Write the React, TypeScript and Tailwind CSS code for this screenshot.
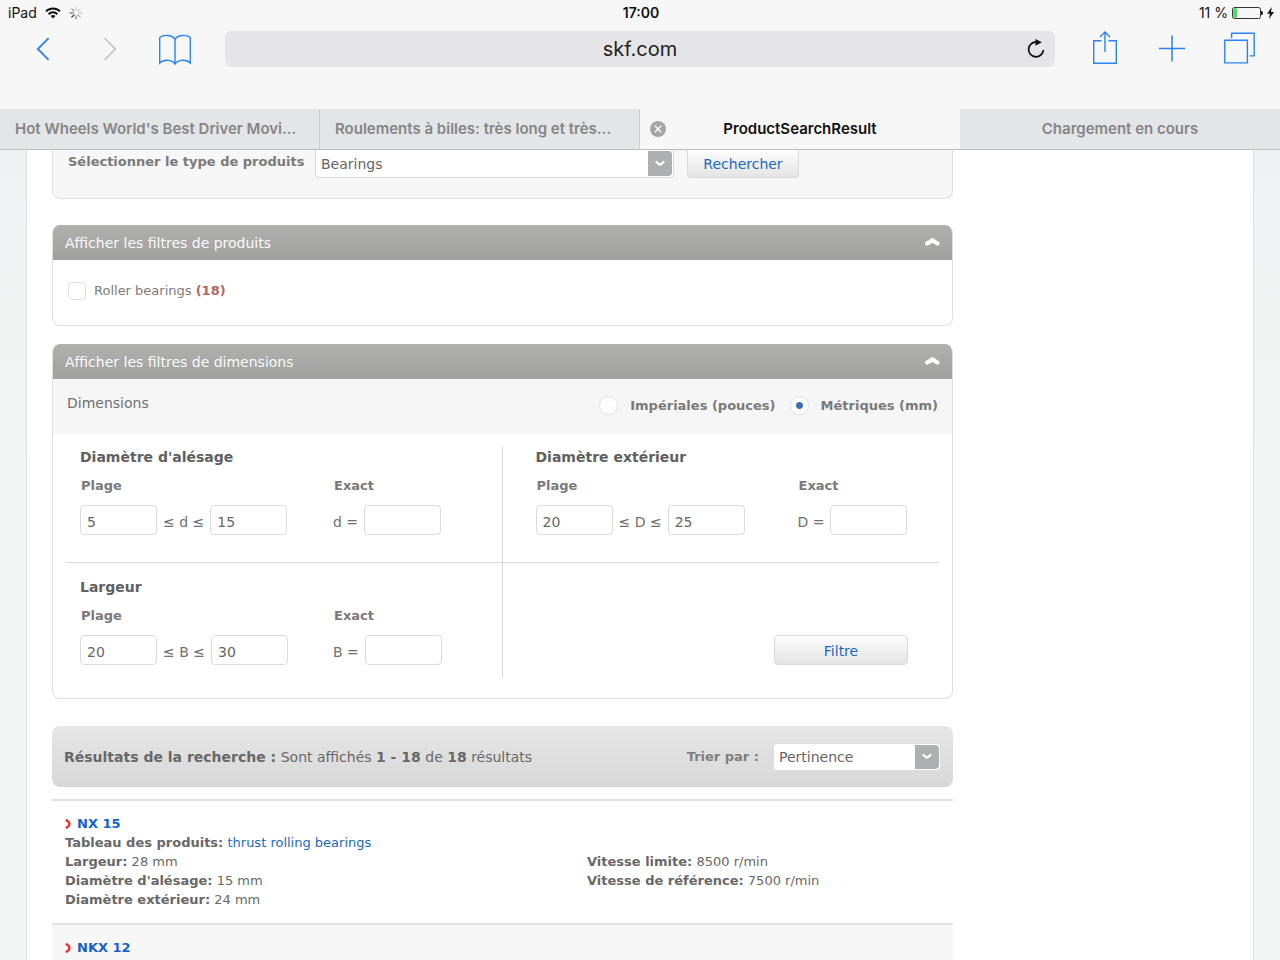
import type { ReactNode } from "react";

const tabs = [
  { title: "Hot Wheels World's Best Driver Movi...", active: false, place: "justify-start" },
  { title: "Roulements à billes: très long et très...", active: false, place: "justify-start" },
  { title: "ProductSearchResult", active: true, place: "justify-center" },
  { title: "Chargement en cours", active: false, place: "justify-center" },
];

const results = [
  {
    name: "NX 15",
    table: "thrust rolling bearings",
    left: [
      ["Largeur:", "28 mm"],
      ["Diamètre d'alésage:", "15 mm"],
      ["Diamètre extérieur:", "24 mm"],
    ],
    right: [
      ["Vitesse limite:", "8500 r/min"],
      ["Vitesse de référence:", "7500 r/min"],
    ],
  },
  { name: "NKX 12", table: "", left: [], right: [] },
];

const StatusBar = () => (
  <div className="grid h-[26px] grid-cols-3 items-center pl-2 pr-1.5 text-sm leading-5 text-[#111]">
    <div className="flex items-center">
      <span>iPad</span>
      <svg className="ml-2 h-3 w-4" viewBox="0 0 16 12" fill="none" stroke="#111" strokeWidth="2">
        <path d="M1 4.4a10 10 0 0 1 14 0" />
        <path d="M3.6 7.2a6.2 6.2 0 0 1 8.8 0" />
        <path d="M8 11.6 5.6 9.1a3.4 3.4 0 0 1 4.8 0z" fill="#111" stroke="none" />
      </svg>
      <svg className="ml-2 h-3.5 w-3.5" viewBox="0 0 14 14" strokeWidth="1.2" strokeLinecap="round">
        <path d="M7 4.2V1" stroke="#ccc" />
        <path d="M9 5l2.2-2.2" stroke="#ccc" />
        <path d="M9.8 7H13" stroke="#bbb" />
        <path d="M9 9l2.2 2.2" stroke="#aaa" />
        <path d="M7 9.8V13" stroke="#888" />
        <path d="M5 9l-2.2 2.2" stroke="#333" />
        <path d="M4.2 7H1" stroke="#555" />
        <path d="M5 5 2.8 2.8" stroke="#999" />
      </svg>
    </div>
    <span className="text-center font-semibold">17:00</span>
    <div className="flex items-center justify-end">
      <span>11 %</span>
      <svg className="ml-1 h-3 w-[31px]" viewBox="0 0 31 12" fill="none">
        <rect x="0.5" y="0.5" width="28" height="11" rx="2" stroke="#333" />
        <rect x="1.3" y="1.3" width="3.7" height="9.4" rx="1" fill="#4cd964" />
        <path d="M29.5 4v4c1.2-.4 1.2-3.6 0-4z" fill="#222" stroke="#222" />
      </svg>
      <svg className="ml-1 h-3 w-[7px]" viewBox="0 0 7 12" fill="#111">
        <path d="M4.8 0 0 6.8h3L2 12l5-7H4z" />
      </svg>
    </div>
  </div>
);

const Toolbar = () => (
  <div className="flex h-[83px] items-start pl-8 pr-6 pt-[5px] text-[#2a82f3]">
    <button aria-label="Précédent" className="mt-1.5 h-6 w-6">
      <svg className="h-6 w-6" viewBox="0 0 24 24" fill="none" stroke="currentColor" strokeWidth="1.8">
        <path d="M16.6 1.2 5.8 12 16.600 22.800" />
      </svg>
    </button>
    <button aria-label="Suivant" className="ml-10 mt-1.5 h-6 w-6 text-[#c9c9c9]">
      <svg className="h-6 w-6" viewBox="0 0 24 24" fill="none" stroke="currentColor" strokeWidth="1.8">
        <path d="M8.6 1.2 19.400 12 8.600 22.800" />
      </svg>
    </button>
    <button aria-label="Signets" className="ml-[38px] mt-[3px] h-8 w-[34px]">
      <svg className="h-8 w-[34px]" viewBox="0 0 34 32" fill="none" stroke="currentColor" strokeWidth="1.4">
        <path d="M17 5.500C15 .6 5.500.2 1.700 3.600V29C5.500 25 14 25.500 17 30 20 25.500 28.500 25 32.300 29V3.600C28.500.2 19 .6 17 5.500zM17 5.500v25" />
      </svg>
    </button>
    <div className="relative ml-[33px] flex h-9 flex-1 items-center rounded-md bg-[#e5e5e7]">
      <input
        aria-label="Adresse"
        defaultValue="skf.com"
        className="w-full bg-transparent text-center text-xl text-[#222] outline-none"
      />
      <button aria-label="Actualiser" className="absolute right-[9px] top-2 h-5 w-5">
        <svg className="h-5 w-5" viewBox="0 0 20 20" fill="none" stroke="#111" strokeWidth="1.8">
          <path d="M10.500 3A7.400 7.400 0 1 0 17.400 11" />
          <path d="M9.500 0 15.800 3.200 9.500 6.800z" fill="#111" stroke="none" />
        </svg>
      </button>
    </div>
    <button aria-label="Partager" className="ml-[37px] h-9 w-[26px]">
      <svg className="h-9 w-[26px]" viewBox="0 0 26 36" fill="none" stroke="currentColor" strokeWidth="1.4">
        <path d="M9.500 9.700H1.700v22.600h22.600V9.700H16.500M13 21V1.500M8 6 13 1l5 5" />
      </svg>
    </button>
    <button aria-label="Nouvel onglet" className="ml-10 mt-[3px] h-7 w-7">
      <svg className="h-7 w-7" viewBox="0 0 28 28" fill="none" stroke="currentColor" strokeWidth="1.5">
        <path d="M14 1.500v26M1 14.500h26" />
      </svg>
    </button>
    <button aria-label="Onglets" className="ml-[38px] mt-px h-8 w-8">
      <svg className="h-8 w-8" viewBox="0 0 32 32" fill="none" stroke="currentColor" strokeWidth="1.4">
        <path d="M.8 8.300h22.600v22.600H.8zM7.600 6.200V1.300h22.600v22.600H25.500" />
      </svg>
    </button>
  </div>
);

const TabStrip = () => (
  <nav className="grid h-[41px] grid-cols-4 border-b border-[#bdbdc0]">
    {tabs.map((tab) =>
      tab.active ? (
        <div key={tab.title} className="relative flex items-center justify-center text-[#111]">
          <button aria-label="Fermer l'onglet" className="absolute left-2.5 top-3 h-4 w-4">
            <svg className="h-4 w-4" viewBox="0 0 16 16">
              <circle cx="8" cy="8" r="8" fill="#a5a5a6" />
              <path d="M4.8 4.8l6.400 6.400M11.200 4.800l-6.400 6.400" stroke="#fff" strokeWidth="1.3" />
            </svg>
          </button>
          <a href="#" className="text-[15px] font-semibold leading-5">{tab.title}</a>
        </div>
      ) : (
        <div
          key={tab.title}
          className={`flex items-center border-r border-[#cfcfd1] bg-[#e4e5e6] px-[15px] text-[#858587] last:border-r-0 ${tab.place}`}
        >
          <a href="#" className="truncate text-[15px] font-semibold leading-5">{tab.title}</a>
        </div>
      ),
    )}
  </nav>
);

const Select = ({ id, value, className }: { id: string; value: string; className: string }) => (
  <div className={`relative border border-[#dcdcdc] bg-white ${className}`}>
    <select id={id} className="h-full w-full appearance-none bg-transparent pl-[5px] pt-px text-sm text-[#666] outline-none">
      <option>{value}</option>
    </select>
    <span className="pointer-events-none absolute bottom-px right-px top-px flex w-6 items-center justify-center rounded-r-sm bg-[#aeafb1]">
      <svg className="h-2 w-2.5" viewBox="0 0 10 8" fill="none" stroke="#fff" strokeWidth="2.4">
        <path d="M.8 1.500C2.500 2.500 3.500 4.500 5 4.500S7.500 2.500 9.200 1.500" />
      </svg>
    </span>
  </div>
);

const Panel = ({ title, children }: { title: string; children: ReactNode }) => (
  <section className="overflow-hidden rounded-lg border border-t-0 border-[#e0e0e0]">
    <button className="flex h-[35px] w-full items-center justify-between bg-gradient-to-b from-[#b0b0ae] to-[#a0a09e] px-3 text-sm text-[#fafafa]">
      <span className="pt-px">{title}</span>
      <svg className="h-3 w-4" viewBox="0 0 16 12" fill="none" stroke="#fff" strokeWidth="4" strokeLinecap="round" strokeLinejoin="round">
        <path d="M3 6.500C4.500 6 7 4.500 8.500 3c1.500 1.500 3.500 3 5 3.500" />
      </svg>
    </button>
    {children}
  </section>
);

const numberBox =
  "h-[30px] w-[77px] rounded border border-[#dcdcdc] bg-white pl-1.5 pt-1 text-sm text-[#666] outline-none";

type DimensionProps = {
  title: string;
  symbol: string;
  min: string;
  max: string;
  columns: string;
};

const Dimension = ({ title, symbol, min, max, columns }: DimensionProps) => (
  <fieldset className="text-sm text-[#707070]">
    <legend className="font-bold leading-5 text-[#606060]">{title}</legend>
    <div className={`mt-[9px] grid gap-y-[9px] ${columns}`}>
      <span className="pl-px text-[13px] font-bold leading-5 text-[#7a7a7a]">Plage</span>
      <span className="pl-px text-[13px] font-bold leading-5 text-[#7a7a7a]">Exact</span>
      <div className="flex items-center gap-1.5">
        <input aria-label={`${title} minimum`} defaultValue={min} className={numberBox} />
        <span className="pt-1">≤ {symbol} ≤</span>
        <input aria-label={`${title} maximum`} defaultValue={max} className={numberBox} />
      </div>
      <label className="flex items-center gap-1.5">
        <span className="pt-1">{symbol} =</span>
        <input className={numberBox} />
      </label>
    </div>
  </fieldset>
);

const radio =
  "h-[19px] w-[19px] appearance-none rounded-full border border-[#e2e2e2] bg-white checked:bg-[radial-gradient(circle,#3a6fb5_3px,#fff_4px)]";

const buttonStyle =
  "border border-[#dadada] bg-gradient-to-b from-[#fdfdfd] to-[#e4e4e4] text-sm text-[#1c69c4]";

const App = () => {
  return (
    <div className="flex h-screen flex-col overflow-hidden bg-gradient-to-b from-[#eeeff2] to-[#f4f6f5] to-50%">
      <header className="shrink-0 bg-[#f7f7f7] font-[Inter,sans-serif]">
        <StatusBar />
        <Toolbar />
        <TabStrip />
      </header>

      <main className="mx-[26px] min-h-0 flex-1 overflow-hidden border-x border-[#dfe0e2] bg-white pl-[25px] pr-6 font-['DejaVu_Sans',sans-serif] text-[#686868]">
        <div className="max-w-[901px]">
          <form className="flex h-[49px] items-start rounded-b-lg border border-t-0 border-[#e0e0e0] bg-[#f7f7f7] pl-[15px]">
            <label htmlFor="product-type" className="w-[247px] pt-0.5 text-[13px] font-bold leading-5 text-[#7a7a7a]">
              Sélectionner le type de produits
            </label>
            <Select id="product-type" value="Bearings" className="h-7 w-[359px] rounded-b border-t-0" />
            <button type="button" className={`ml-[13px] h-7 w-28 rounded-b border-t-0 ${buttonStyle}`}>
              Rechercher
            </button>
          </form>

          <div className="mt-[26px]">
            <Panel title="Afficher les filtres de produits">
              <div className="px-[15px] pb-6 pt-[21px]">
                <label className="flex items-center gap-2 text-[13px] leading-5 text-[#7c7c7c]">
                  <input type="checkbox" className="h-[18px] w-[18px] appearance-none rounded border border-[#dfdfdf] bg-white" />
                  <span>
                    Roller bearings <b className="text-[#b5665c]">(18)</b>
                  </span>
                </label>
              </div>
            </Panel>
          </div>

          <div className="mt-[18px]">
            <Panel title="Afficher les filtres de dimensions">
              <div className="flex h-[55px] items-center justify-between bg-[#f6f6f6] px-3.5 pb-0.5">
                <h2 className="pb-1.5 text-sm leading-5 text-[#707070]">Dimensions</h2>
                <div className="flex items-center gap-3.5 text-[13px] font-bold text-[#7a7a7a]">
                  <label className="flex items-center gap-3">
                    <input type="radio" name="unit" className={radio} />
                    Impériales (pouces)
                  </label>
                  <label className="flex items-center gap-3">
                    <input type="radio" name="unit" defaultChecked className={radio} />
                    Métriques (mm)
                  </label>
                </div>
              </div>
              <div className="mx-[13px] grid grid-cols-2 pb-5 pt-[13px]">
                <div className="h-[116px] border-b border-r border-[#dadada] pl-3.5">
                  <Dimension title="Diamètre d'alésage" symbol="d" min="5" max="15" columns="grid-cols-[253px_1fr]" />
                </div>
                <div className="h-[116px] border-b border-[#dadada] pl-[33px]">
                  <Dimension title="Diamètre extérieur" symbol="D" min="20" max="25" columns="grid-cols-[262px_1fr]" />
                </div>
                <div className="h-[115px] border-r border-[#dadada] pl-3.5 pt-3.5">
                  <Dimension title="Largeur" symbol="B" min="20" max="30" columns="grid-cols-[253px_1fr]" />
                </div>
                <div className="flex h-[115px] items-end justify-end pb-[13px] pr-[31px]">
                  <button className={`h-[30px] w-[134px] rounded pt-px ${buttonStyle}`}>Filtre</button>
                </div>
              </div>
            </Panel>
          </div>

          <div className="mt-[27px] flex h-[61px] items-center justify-between rounded-lg bg-gradient-to-b from-[#e6e6e6] to-[#d8d8d8] px-3">
            <p className="text-sm leading-5">
              <b>Résultats de la recherche :</b> Sont affichés <b>1 - 18</b> de <b>18</b> résultats
            </p>
            <div className="flex items-center">
              <label htmlFor="sort" className="mr-3.5 text-[13px] font-bold text-[#7e7e7e]">
                Trier par :
              </label>
              <Select id="sort" value="Pertinence" className="h-7 w-[168px] rounded" />
            </div>
          </div>

          <ul className="mt-3">
            {results.map((item) => (
              <li
                key={item.name}
                className="border-t-2 border-[#e4e4e4] px-[13px] pb-3.5 pt-[13px] text-[13px] leading-[19px] even:bg-[#f7f7f8]"
              >
                <a href="#" className="flex items-center gap-1.5 font-bold text-[#1462c8]">
                  <svg className="h-2.5 w-1.5" viewBox="0 0 6 10" fill="none" stroke="#e8352e" strokeWidth="2.4">
                    <path d="M.8.8C3 2 4.500 3.500 4.500 5S3 8 .8 9.200" />
                  </svg>
                  {item.name}
                </a>
                {item.table && (
                  <p>
                    <b>Tableau des produits:</b>{" "}
                    <a href="#" className="text-[#1c69c4]">{item.table}</a>
                  </p>
                )}
                <div className="grid grid-cols-[522px_1fr]">
                  {[item.left, item.right].map((rows, i) => (
                    <div key={i}>
                      {rows.map(([label, value]) => (
                        <p key={label}>
                          <b>{label}</b> {value}
                        </p>
                      ))}
                    </div>
                  ))}
                </div>
              </li>
            ))}
          </ul>
        </div>
      </main>
    </div>
  );
};

export default App;
